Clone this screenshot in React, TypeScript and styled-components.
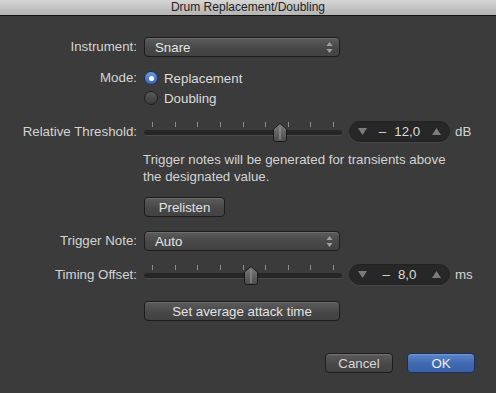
import React from 'react'
import styled, { createGlobalStyle } from 'styled-components'

const GlobalStyle = createGlobalStyle`
  html, body {
    margin: 0;
    padding: 0;
    background: #3b3b3b;
  }
  body {
    font-family: 'Liberation Sans', Arial, sans-serif;
    -webkit-font-smoothing: antialiased;
  }
`

const Window = styled.div`
  width: 496px;
  height: 393px;
  background: #3b3b3b;
  display: flex;
  flex-direction: column;
  overflow: hidden;
`

const TitleBar = styled.div`
  height: 15px;
  border-bottom: 1px solid #141414;
  background: linear-gradient(#d6d6d6, #b2b2b2);
  color: #222;
  font-size: 12px;
  line-height: 15px;
  text-align: center;
`

const Row = styled.div<{ top: number }>`
  display: grid;
  grid-template-columns: 137px auto;
  column-gap: 7px;
  align-items: center;
  margin-top: ${(p) => p.top}px;
`

const Label = styled.div<{ top?: boolean }>`
  text-align: right;
  color: #d4d4d4;
  font-size: 13.3px;
  white-space: nowrap;
  align-self: ${(p) => (p.top ? 'start' : 'center')};
  line-height: 20px;
`

const Controls = styled.div`
  display: flex;
  align-items: center;
`

const PopupButton = styled.div`
  box-sizing: border-box;
  width: 196px;
  height: 20px;
  border: 1px solid #1d1d1d;
  border-radius: 4px;
  background: linear-gradient(#5c5c5c, #484848 55%, #424242);
  box-shadow: inset 0 1px 0 rgba(255, 255, 255, 0.12);
  color: #e6e6e6;
  font-size: 13.3px;
  display: flex;
  align-items: center;
  justify-content: space-between;
  padding: 0 6px 0 10px;
`

const Arrows = styled.svg`
  width: 7px;
  height: 11px;
`

const PushButton = styled.div<{ width: number }>`
  box-sizing: border-box;
  width: ${(p) => p.width}px;
  height: 20px;
  border: 1px solid #1d1d1d;
  border-radius: 4px;
  background: linear-gradient(#5c5c5c, #484848 55%, #424242);
  box-shadow: inset 0 1px 0 rgba(255, 255, 255, 0.12);
  color: #e2e2e2;
  font-size: 13.3px;
  display: flex;
  align-items: center;
  justify-content: center;
`

const RadioGroup = styled.div`
  display: flex;
  flex-direction: column;
`

const RadioOption = styled.div`
  height: 20px;
  display: flex;
  align-items: center;
  gap: 6px;
  color: #dcdcdc;
  font-size: 13.3px;
`

const RadioDot = styled.span<{ checked?: boolean }>`
  box-sizing: border-box;
  width: 14px;
  height: 14px;
  border-radius: 50%;
  border: 1px solid ${(p) => (p.checked ? '#1c3466' : '#1f1f1f')};
  background: ${(p) =>
    p.checked
      ? 'linear-gradient(#6f98da, #3b67b4)'
      : 'linear-gradient(#5a5a5a, #3a3a3a)'};
  display: flex;
  align-items: center;
  justify-content: center;
  &::after {
    content: '';
    display: ${(p) => (p.checked ? 'block' : 'none')};
    width: 5px;
    height: 5px;
    border-radius: 50%;
    background: #fff;
  }
`

const Slider = styled.div`
  position: relative;
  width: 198px;
  height: 21px;
`

const Ticks = styled.div`
  position: absolute;
  left: 8px;
  right: 8px;
  top: 1px;
  height: 5px;
  display: flex;
  justify-content: space-between;
`

const Tick = styled.span`
  width: 1px;
  height: 5px;
  background: #8e8e8e;
`

const Track = styled.div`
  position: absolute;
  left: 0;
  right: 0;
  top: 9px;
  height: 5px;
  border-radius: 3px;
  background: #262626;
  box-shadow: 0 1px 0 rgba(255, 255, 255, 0.08);
`

const Thumb = styled.svg`
  position: absolute;
  top: 2px;
  width: 14px;
  height: 19px;
  margin-left: -7px;
`

const Stepper = styled.div`
  box-sizing: border-box;
  width: 101px;
  height: 21px;
  margin-left: 7px;
  border-radius: 11px;
  background: #272727;
  border: 1px solid #222;
  box-shadow: 0 1px 0 rgba(255, 255, 255, 0.06);
  display: flex;
  align-items: center;
  justify-content: space-between;
  padding: 0 8px;
  color: #dadada;
  font-size: 13.3px;
`

const StepperValue = styled.span`
  display: flex;
  align-items: center;
  gap: 8px;
`

const Tri = styled.svg`
  width: 9px;
  height: 7px;
`

const Unit = styled.span`
  margin-left: 5px;
  color: #d4d4d4;
  font-size: 13.3px;
`

const Description = styled.div`
  margin: 9px 0 0 143px;
  color: #d4d4d4;
  font-size: 13.3px;
  line-height: 17px;
`

const Footer = styled.div`
  margin-top: 32px;
  display: flex;
  justify-content: flex-end;
  gap: 14px;
  padding-right: 21px;
`

const DialogButton = styled.div<{ primary?: boolean }>`
  box-sizing: border-box;
  width: 68px;
  height: 20px;
  border-radius: 4px;
  border: 1px solid ${(p) => (p.primary ? '#18305c' : '#1d1d1d')};
  background: ${(p) =>
    p.primary
      ? 'linear-gradient(#5d87cc, #3f68b0 55%, #3a62a8)'
      : 'linear-gradient(#5c5c5c, #484848 55%, #424242)'};
  box-shadow: inset 0 1px 0 rgba(255, 255, 255, 0.14);
  color: ${(p) => (p.primary ? '#f0f0f0' : '#d8d8d8')};
  font-size: 13.3px;
  display: flex;
  align-items: center;
  justify-content: center;
`

const PopupArrows = () => (
  <Arrows viewBox="0 0 7 11">
    <path d="M3.5 0 L6.5 4 L0.5 4 Z" fill="#a0a0a0" />
    <path d="M3.5 11 L6.5 7 L0.5 7 Z" fill="#a0a0a0" />
  </Arrows>
)

const SliderControl = ({ value }: { value: number }) => (
  <Slider>
    <Ticks>
      {Array.from({ length: 9 }).map((_, i) => (
        <Tick key={i} />
      ))}
    </Ticks>
    <Track />
    <Thumb viewBox="0 0 14 19" style={{ left: `${value * 198}px` }}>
      <defs>
        <linearGradient id="thumbFill" x1="0" y1="0" x2="0" y2="1">
          <stop offset="0" stopColor="#7a7a7a" />
          <stop offset="1" stopColor="#4c4c4c" />
        </linearGradient>
      </defs>
      <path
        d="M7 0.5 L13.5 6 L13.5 16.5 Q13.5 18.5 11.5 18.5 L2.5 18.5 Q0.5 18.5 0.5 16.5 L0.5 6 Z"
        fill="url(#thumbFill)"
        stroke="#1a1a1a"
      />
      <line x1="7" y1="4" x2="7" y2="17" stroke="#9a9a9a" strokeWidth="1" />
    </Thumb>
  </Slider>
)

const ValueStepper = ({ value }: { value: string }) => (
  <Stepper>
    <Tri viewBox="0 0 9 7">
      <path d="M0 0 L9 0 L4.5 7 Z" fill="#7c7c7c" />
    </Tri>
    <StepperValue>
      <span>–</span>
      <span>{value}</span>
    </StepperValue>
    <Tri viewBox="0 0 9 7">
      <path d="M0 7 L9 7 L4.5 0 Z" fill="#7c7c7c" />
    </Tri>
  </Stepper>
)

const App = () => {
  return (
    <Window>
      <GlobalStyle />
      <TitleBar>Drum Replacement/Doubling</TitleBar>

      <Row top={21}>
        <Label>Instrument:</Label>
        <PopupButton>
          <span>Snare</span>
          <PopupArrows />
        </PopupButton>
      </Row>

      <Row top={11}>
        <Label top>Mode:</Label>
        <RadioGroup>
          <RadioOption>
            <RadioDot checked />
            Replacement
          </RadioOption>
          <RadioOption>
            <RadioDot />
            Doubling
          </RadioOption>
        </RadioGroup>
      </Row>

      <Row top={13}>
        <Label>Relative Threshold:</Label>
        <Controls>
          <SliderControl value={0.687} />
          <ValueStepper value="12,0" />
          <Unit>dB</Unit>
        </Controls>
      </Row>

      <Description>
        Trigger notes will be generated for transients above
        <br />
        the designated value.
      </Description>

      <Row top={12}>
        <span />
        <PushButton width={81}>Prelisten</PushButton>
      </Row>

      <Row top={14}>
        <Label>Trigger Note:</Label>
        <PopupButton>
          <span>Auto</span>
          <PopupArrows />
        </PopupButton>
      </Row>

      <Row top={13}>
        <Label>Timing Offset:</Label>
        <Controls>
          <SliderControl value={0.54} />
          <ValueStepper value="8,0" />
          <Unit>ms</Unit>
        </Controls>
      </Row>

      <Row top={16}>
        <span />
        <PushButton width={196}>Set average attack time</PushButton>
      </Row>

      <Footer>
        <DialogButton>Cancel</DialogButton>
        <DialogButton primary>OK</DialogButton>
      </Footer>
    </Window>
  )
}

export default App
